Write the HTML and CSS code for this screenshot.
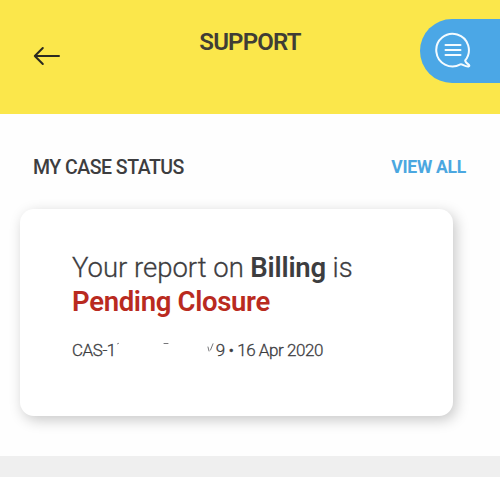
FILE: index.html
```html
<!DOCTYPE html>
<html lang="en">
<head>
    <meta charset="UTF-8">
    <meta name="viewport" content="width=device-width, initial-scale=1.0">
    <link rel="stylesheet" href="styles.css">
    <title>Support</title>
</head>
<body>
    <header class="header">
        <a class="back" href="#" aria-label="Back">
            <svg width="28" height="20" viewBox="0 0 28 20">
                <path d="M9.8 2 L1.8 10 L9.8 18 M1.8 10 H26" />
            </svg>
        </a>
        <h1 class="title">SUPPORT</h1>
        <a class="chat" href="#" aria-label="Chat">
            <svg width="38" height="38" viewBox="0 0 38 38">
                <path d="M31.2 28.4 A16.3 16.3 0 1 0 26.4 32.4 C28.6 31.8 30.6 35 34.8 34.4 C35.6 34.2 35.4 33.4 34.8 32.8 C32.6 31 31.2 30 31.2 28.4 Z" />
                <path d="M11.5 13 H26.5 M11.5 18 H26.5 M11.5 23 H26.5" />
            </svg>
        </a>
    </header>

    <main class="content">
        <div class="section-head">
            <h2 class="section-title">MY CASE STATUS</h2>
            <a class="view-all" href="#">VIEW ALL</a>
        </div>

        <div class="card">
            <p class="report"><span class="report-text">Your report on</span> <b class="topic">Billing</b> <span>is</span></p>
            <p class="status">Pending Closure</p>
            <p class="meta">
                <span class="case-id">CAS-1</span>
                <!-- hidden part of the case number -->
                <svg class="masked" width="100" height="20" viewBox="0 0 100 20">
                    <path d="M1.5 3.8 L2.5 3.4 M48 3.5 H52 M92 7 L93 11 M94.5 10 L97 3.8" />
                </svg>
                <span class="case-date">9 • 16 Apr 2020</span>
            </p>
        </div>
    </main>
</body>
</html>
```

FILE: styles.css
```css
body {
    margin: 0;
    min-height: 477px;
    background-color: #efefef;
    color: #3d3d3f;
    font-family: Roboto, "Liberation Sans", sans-serif;
}

h1, h2, p {
    margin: 0;
}

a {
    text-decoration: none;
}

svg {
    display: block;
    flex: none;
    fill: none;
    stroke-linecap: round;
    stroke-linejoin: round;
}

.header {
    display: grid;
    grid-template-columns: 1fr auto 1fr;
    box-sizing: border-box;
    height: 114px;
    background-color: #fbe74b;
}

.back {
    padding: 46px 0 0 33px;
    stroke: #2b2a20;
    stroke-width: 2;
}

.title {
    padding-top: 28px;
    color: #403d35;
    font-size: 24px;
    line-height: 28px;
    font-weight: 600;
    letter-spacing: -0.8px;
}

.chat {
    justify-self: end;
    box-sizing: border-box;
    width: 80px;
    height: 64px;
    margin-top: 19px;
    padding: 13px 0 0 14px;
    border-radius: 32px 0 0 32px;
    background-color: #4ba7e6;
    stroke: #f4fbff;
    stroke-width: 2;
}

.content {
    box-sizing: border-box;
    height: 342px;
    padding: 41px 34px 0 20px;
    background-color: #fefefe;
}

.section-head {
    display: flex;
    justify-content: space-between;
    align-items: center;
    height: 24px;
    padding-left: 13px;
}

.section-title {
    font-size: 19.5px;
    font-weight: 500;
    letter-spacing: -0.5px;
}

.view-all {
    color: #4ba7e0;
    font-size: 17.5px;
    font-weight: 700;
    letter-spacing: -0.25px;
}

.card {
    box-sizing: border-box;
    width: 433px;
    height: 207px;
    margin-top: 30px;
    padding: 42px 52px 0;
    border-radius: 14px;
    background-color: #fff;
    box-shadow: 3px 4px 14px rgba(0, 0, 0, 0.22);
}

.report, .status {
    font-size: 27.5px;
    line-height: 34px;
    white-space: nowrap;
}

.report {
    font-weight: 300;
    letter-spacing: -0.1px;
    -webkit-text-stroke: 0.3px;
}

.report-text {
    letter-spacing: -0.02px;
}

.topic {
    font-weight: 600;
    letter-spacing: -0.2px;
    -webkit-text-stroke: 0;
}

.status {
    color: #b92a20;
    font-weight: 600;
    letter-spacing: -0.32px;
}

.meta {
    display: flex;
    align-items: center;
    height: 24px;
    margin-top: 19px;
    font-size: 17px;
    font-weight: 300;
    letter-spacing: -0.45px;
    white-space: nowrap;
    -webkit-text-stroke: 0.3px;
}

.masked {
    stroke: #77777a;
    stroke-width: 1;
}
```
